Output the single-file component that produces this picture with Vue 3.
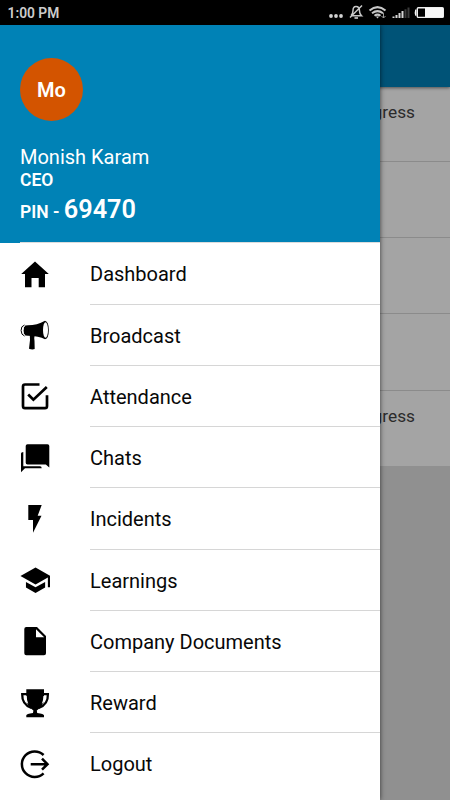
<script setup>
const items = [
  { label: 'Dashboard', icon: 'home' },
  { label: 'Broadcast', icon: 'horn' },
  { label: 'Attendance', icon: 'check' },
  { label: 'Chats', icon: 'chat' },
  { label: 'Incidents', icon: 'bolt' },
  { label: 'Learnings', icon: 'school' },
  { label: 'Company Documents', icon: 'doc' },
  { label: 'Reward', icon: 'cup' },
  { label: 'Logout', icon: 'logout' }
]
const rows = ['In Progress', '', '', '', 'In Progress']
</script>

<template>
  <div class="screen">
    <header class="status">
      <span class="time">1:00 PM</span>
      <svg class="tray" width="122" height="25" viewBox="0 0 122 25">
        <g fill="#d2d2d2">
          <circle cx="3" cy="16" r="1.9" /><circle cx="8" cy="16" r="1.9" /><circle cx="13" cy="16" r="1.9" />
        </g>
        <g fill="none" stroke="#c8c8c8" stroke-width="1.5">
          <path d="M23 15.500Q25 14 25 10.500Q25 6.500 28 6.500Q31.500 6.500 31.500 11Q31.500 14 33.500 15.800H24M34 5.500L22 17.500" />
          <path d="M26.500 18h3.500" stroke-width="1.700" />
          <path d="M41.500 10.500Q49.500 3.800 57.500 10.500M44 13.300Q49.500 9 55 13.300M46.500 15.800Q49.500 13.500 52.500 15.800" stroke-width="2" />
        </g>
        <path d="M47.800 16.500h3.400L49.500 18.600z" fill="#c8c8c8" />
        <path d="M55.500 13v5m-2-2l2 2 2-2" stroke="#999" fill="none" />
        <path d="M64.500 16.500h2V18h-2zM67.500 15h2V18h-2zM70.500 13h2V18h-2zM73.500 11h2V18h-2z" fill="#d6d6d6" />
        <path d="M76.500 9.300h2V18h-2zM79.500 7.500h2V18h-2z" fill="#3b3b3b" />
        <rect x="89.300" y="7.800" width="26" height="9.600" rx="1" fill="none" stroke="#eee" stroke-width="1.400" />
        <path d="M97 8h18v9H97zM88.500 9.500v6.200h-1.300q-1-3.100 0-6.200z" fill="#f7f7f7" />
      </svg>
    </header>
    <main class="page">
      <div class="toolbar"></div>
      <div v-for="(r, i) in rows" :key="i" class="card"><span>{{ r }}</span></div>
    </main>
    <aside class="drawer">
      <div class="profile">
        <div class="avatar">Mo</div>
        <div class="name">Monish Karam</div>
        <div class="role">CEO</div>
        <div class="pin">PIN - <b>69470</b></div>
      </div>
      <nav>
        <div v-for="item in items" :key="item.label" class="item">
          <svg class="icon" width="30" height="30" viewBox="0 0 30 30">
            <path v-if="item.icon === 'home'" d="M15 2.500L28.800 15H25v13.300h-6.300V19h-7.200v9.300H5V15H1.200z" />
            <g v-else-if="item.icon === 'horn'">
              <path d="M4 6.500Q5 5.200 8 5.200Q17 5.200 25 .7Q28.800 1.500 28.800 10Q28.800 18.500 25 19.300Q19 15.800 8 15.800Q5 15.800 4 14.500Q2.800 10.500 4 6.500z" />
              <path d="M4.500 5Q.9 6 1.100 10.500Q1.200 15 4.500 16" fill="none" stroke="#000" />
              <path d="M4.800 6Q3 7 3 10.500Q3 14 4.800 15" fill="none" stroke="#fff" stroke-width=".8" />
              <ellipse cx="25.500" cy="10" rx="2.500" ry="7.800" fill="#fff" />
              <path d="M9.800 15h5q-1 3-.3 6l.2 8q-2.400 1-5.700-.3l1-8.700z" />
            </g>
            <g v-else-if="item.icon === 'check'" fill="none" stroke="#000" stroke-width="2.700">
              <path d="M19.500 3.500H5Q3 3.500 3 5.500V25Q3 27.200 5 27.200H25Q27 27.200 27 25V14.200" />
              <path d="M8.200 13.500L13.400 18.700L26.800 6" />
            </g>
            <path v-else-if="item.icon === 'chat'" d="M7.500 1.200h20q1.800 0 1.800 1.800v21.500l-3.500-3H7.500q-1.800 0-1.800-1.800V3q0-1.800 1.800-1.800zM1 10.500Q1 8.900 3.300 8.900V23.200H20Q21.700 23.200 21.700 25.200H5L1 29.200z" />
            <path v-else-if="item.icon === 'bolt'" d="M8.300 1H21.700L17.700 11.700H21.500L13 28.700V16H8.300z" />
            <path v-else-if="item.icon === 'school'" transform="translate(-.9 -1.700) scale(1.370 1.410)" d="M5 13.180v4L12 21l7-3.820v-4L12 17zM12 3L1 9l11 6 9-4.910V17h2V9z" />
            <path v-else-if="item.icon === 'doc'" fill-rule="evenodd" d="M6.300 1H17L26 10V27.300Q26 29.300 24 29.300H6.300Q4.300 29.300 4.300 27.300V3Q4.300 1 6.300 1zM16 3.200V11.300H24.200z" />
            <g v-else-if="item.icon === 'cup'">
              <path d="M6.300 1.200H24V12Q23.500 18 16.800 22.500L17.200 25Q24 26 24 27.300V29.300H6.300V27.300Q6.300 26 13 25L13.400 22.500Q6.800 18 6.300 12z" />
              <path d="M7 6.100H2.200Q1.800 16.500 11.500 20M23.200 6.100H27.900Q28.300 16.500 18.700 20" fill="none" stroke="#000" stroke-width="2.300" />
              <path d="M4.500 8h2.200q0 4 1.600 8Q4.600 13 4.500 8zM25.600 8h-2.200q0 4-1.600 8Q25.500 13 25.600 8z" fill="#fff" />
            </g>
            <g v-else fill="none" stroke="#000" stroke-width="2.500">
              <path d="M23.600 6A12.800 12.800 0 1 0 23.600 24.400" />
              <path d="M10.700 15.200H27M22 9.700L27.500 15.200L22 20.700" />
            </g>
          </svg>
          <div class="label">{{ item.label }}</div>
        </div>
      </nav>
    </aside>
  </div>
</template>

<style>
body { margin: 0; overflow: hidden; }
</style>

<style scoped>
.screen {
  position: relative;
  width: 450px;
  height: 800px;
  overflow: hidden;
  background: #909090;
  font-family: Roboto, sans-serif;
  color: #080808;
}
.status {
  display: flex;
  justify-content: space-between;
  align-items: center;
  box-sizing: border-box;
  height: 25px;
  padding-left: 7.500px;
  background: #000;
}
.time { color: #ccc; font-size: 13.800px; font-weight: 600; line-height: 25px; padding-top: 2px; }
.toolbar {
  position: relative;
  height: 62px;
  background: #005377;
  box-shadow: 0 1px 3px rgba(0, 0, 0, .5);
}
.card {
  box-sizing: border-box;
  height: 76.200px;
  padding: 13px 35px 0 0;
  border-bottom: 1px solid #8b8b8b;
  background: #a4a4a4;
  color: #2b2b2b;
  font-size: 17.300px;
  line-height: 24px;
  text-align: right;
}
.card:nth-child(2) { height: 75px; }
.card:last-child { height: 75.500px; border-bottom: 0; }
.drawer {
  position: absolute;
  top: 25px;
  left: 0;
  width: 380px;
  height: 775px;
  background: #fff;
  box-shadow: 0 0 5px rgba(0, 0, 0, .65);
  clip-path: inset(0 -12px 0 0);
}
.profile {
  box-sizing: border-box;
  height: 218.250px;
  padding: 33px 20px 0;
  background: linear-gradient(#dcdcdc, #dcdcdc) 20px 100% / 360px 1.500px no-repeat #0082b6;
  color: #fff;
}
.avatar {
  width: 63px;
  height: 63px;
  border-radius: 50%;
  background: #d35400;
  font-size: 20px;
  font-weight: 600;
  line-height: 64px;
  text-align: center;
}
.name { margin-top: 23px; font-size: 20px; line-height: 26px; }
.role { font-size: 17.500px; font-weight: 600; line-height: 21px; }
.pin { font-size: 17.500px; font-weight: 600; line-height: 37px; }
.pin b { font-size: 25.300px; font-weight: 600; }
.item {
  display: flex;
  align-items: center;
  height: 61.250px;
  padding-left: 20px;
}
.icon { flex: none; margin-right: 40px; }
.label {
  flex: 1;
  box-sizing: border-box;
  height: 61.250px;
  border-bottom: 1px solid #d6d6d6;
  font-size: 20px;
  line-height: 62px;
}
.item:last-child .label { border-bottom: 0; }
</style>
